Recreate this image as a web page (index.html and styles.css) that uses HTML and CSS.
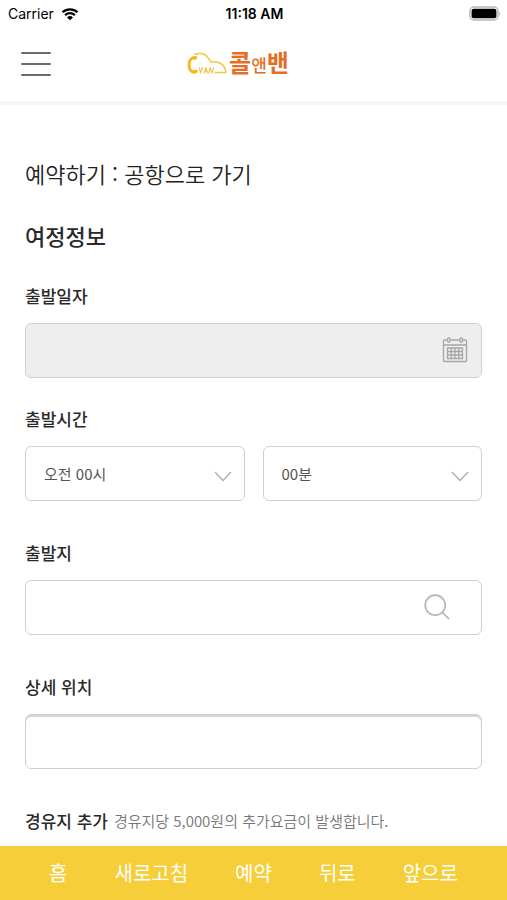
FILE: index.html
```html
<!DOCTYPE html>
<html lang="ko">
<head>
<meta charset="utf-8">
<meta name="viewport" content="width=device-width, initial-scale=1">
<title>콜앤밴 예약하기</title>
<link rel="stylesheet" href="styles.css">
</head>
<body>
<div class="status">
  <div class="carrier">
    <span>Carrier</span>
    <svg width="18" height="14" viewBox="0 0 18 14" aria-hidden="true">
      <path d="M1.5 5.3a11 11 0 0 1 15 0M4.1 8.1a7.2 7.2 0 0 1 9.8 0" fill="none" stroke="#000" stroke-width="2.2"/>
      <path d="M9 13.2 6 10.4a4.4 4.4 0 0 1 6 0z"/>
    </svg>
  </div>
  <span class="clock">11:18 AM</span>
  <svg class="battery" width="32" height="16" viewBox="0 0 32 16" aria-hidden="true">
    <rect x="1" y="1" width="28" height="13" rx="4" fill="#fff" stroke="#b5b5b5" stroke-width="1.4"/>
    <rect x="2.6" y="2.8" width="24.8" height="9.4" rx="2"/>
    <path d="M30.4 5.5q1.6 2 0 4z" fill="#999"/>
  </svg>
</div>
<header class="header">
  <button class="menu" type="button" aria-label="메뉴">
    <svg width="30" height="26" viewBox="0 0 30 26" aria-hidden="true">
      <path d="M1 2h28M1 13h28M1 24h28" stroke="#6b6b6b" stroke-width="2" stroke-linecap="round"/>
    </svg>
  </button>
  <a class="logo" href="#">
    <svg width="41" height="24" viewBox="0 0 41 24" aria-hidden="true">
      <g fill="none" stroke-linecap="round" stroke-linejoin="round">
        <path d="M8 2.2C14 .5 19 2 21.5 6.500L24 10C31 8.500 38 12 39 20.500H28" stroke="#f2c744" stroke-width="1.500"/>
        <path d="M6.500 5.500C.5 7.500.5 19 7 20.500" stroke="#f5b91c" stroke-width="2.800"/>
        <path d="M6.500 6.200 8.500 5.800M7 19.800 9 19.500" stroke="#f5b91c" stroke-width="3.400"/>
        <path d="M12.500 16 13.500 21 15.500 15.500M17 21 19 15.500 20 21M17.500 19h3M22 21 23 15.500 25 21 26.500 15.500" stroke="#efca59" stroke-width="1.300"/>
      </g>
    </svg>
    <span class="brand">콜<small>앤</small>밴</span>
  </a>
</header>
<main class="content">
  <h1 class="title">예약하기 : 공항으로 가기</h1>
  <h2 class="section">여정정보</h2>
  <form>
    <div class="group group-date">
      <label class="label" for="date">출발일자</label>
      <div class="field">
        <input class="control disabled" id="date" type="text" readonly>
        <svg class="icon icon-calendar" width="26" height="26" viewBox="0 0 26 26" fill="none" stroke="#a6a6a6" stroke-width="1.300" aria-hidden="true">
          <path d="M5 3H2.500A1 1 0 0 0 1.500 4V23.500a1 1 0 0 0 1 1h21a1 1 0 0 0 1-1V4a1 1 0 0 0-1-1H21M8.500 3h9M1.500 8h23"/>
          <ellipse cx="6.800" cy="3" rx="1.300" ry="2.200"/>
          <ellipse cx="19.200" cy="3" rx="1.300" ry="2.200"/>
          <path d="M5.500 11h15v10.500h-15zM5.500 14.500h15M5.500 18h15M9.250 11v10.500M13 11v10.500M16.750 11v10.500"/>
        </svg>
      </div>
    </div>
    <div class="group">
      <label class="label" for="hour">출발시간</label>
      <div class="pair">
        <div class="field">
          <select class="control" id="hour"><option>오전 00시</option></select>
          <svg class="icon icon-arrow" width="18" height="11" viewBox="0 0 18 11" aria-hidden="true"><path d="M1 1 9 9.500 17 1" fill="none" stroke="#aaa" stroke-width="1.200"/></svg>
        </div>
        <div class="field">
          <select class="control" id="minute" aria-label="출발시간 분"><option>00분</option></select>
          <svg class="icon icon-arrow" width="18" height="11" viewBox="0 0 18 11" aria-hidden="true"><path d="M1 1 9 9.500 17 1" fill="none" stroke="#aaa" stroke-width="1.200"/></svg>
        </div>
      </div>
    </div>
    <div class="group">
      <label class="label" for="origin">출발지</label>
      <div class="field">
        <input class="control" id="origin" type="text">
        <button class="icon icon-search" type="button" aria-label="검색">
          <svg width="26" height="26" viewBox="0 0 26 26" fill="none" stroke="#b5b5b5" stroke-width="1.700" aria-hidden="true"><circle cx="11.200" cy="11.200" r="10"/><path d="m18 18 7 7"/></svg>
        </button>
      </div>
    </div>
    <div class="group">
      <label class="label" for="detail">상세 위치</label>
      <div class="field"><input class="control inset" id="detail" type="text"></div>
    </div>
    <div class="stopover">
      <h3 class="label">경유지 추가</h3>
      <p class="hint">경유지당 5,000원의 추가요금이 발생합니다.</p>
    </div>
  </form>
</main>
<nav class="tabs">
  <a href="#">홈</a>
  <a href="#">새로고침</a>
  <a href="#">예약</a>
  <a href="#">뒤로</a>
  <a href="#">앞으로</a>
</nav>
</body>
</html>
```
FILE: styles.css
```css
* { box-sizing: border-box; }

body {
  margin: 0;
  padding-bottom: 54px;
  background: #fff;
  color: #2a2a2a;
  font-family: "Noto Sans CJK KR", sans-serif;
}

h1, h2, h3, p { margin: 0; }
a { text-decoration: none; }
svg { display: block; }

.status {
  display: grid;
  grid-template-columns: 1fr auto 1fr;
  align-items: center;
  height: 28px;
  padding: 0 6px 0 8px;
  color: #000;
  font: 14px/20px Inter, sans-serif;
}

.carrier { display: flex; align-items: center; gap: 7px; }
.clock { font-weight: 600; }
.battery { justify-self: end; }

.header {
  display: grid;
  grid-template-columns: 1fr auto 1fr;
  align-items: center;
  height: 77px;
  padding: 0 21px 2px;
  border-bottom: 4px solid #f5f5f5;
}

.menu {
  justify-self: start;
  padding: 0;
  border: 0;
  background: none;
}

.logo { display: flex; align-items: center; gap: 1px; padding-right: 31px; }

.brand {
  color: #e36f25;
  font-size: 24px;
  font-weight: 700;
  line-height: 28px;
}
.brand small { font-size: 17px; font-weight: 500; }

.content { padding: 52px 25px 16px; }

.title {
  color: #222;
  font-size: 22px;
  font-weight: 350;
  line-height: 32px;
}

.section {
  margin: 30px 0 33px;
  font-size: 22px;
  font-weight: 500;
  line-height: 32px;
}

.group { margin-bottom: 40px; }
.group-date { margin-bottom: 29px; }

.label {
  display: block;
  font-size: 17px;
  font-weight: 500;
  line-height: 24px;
}

.group .label { margin-bottom: 15px; }

.pair {
  display: grid;
  grid-template-columns: 1fr 1fr;
  gap: 18px;
}

.field { position: relative; }

.control {
  display: block;
  width: 100%;
  height: 55px;
  padding: 0 18px;
  border: 1px solid #d0d0d0;
  border-radius: 6px;
  outline: 0;
  appearance: none;
  background: #fff;
  color: #555;
  font: 15px/24px "Noto Sans CJK KR", sans-serif;
}

.disabled { background: #eee; }
.inset { box-shadow: inset 0 2px 1px #d4d4d4; }

.icon { position: absolute; }
.icon-calendar { top: 14px; right: 14px; }
.icon-arrow { top: 25px; right: 13px; pointer-events: none; }
.icon-search {
  top: 14px;
  right: 32px;
  padding: 0;
  border: 0;
  background: none;
}

.stopover { display: flex; align-items: center; gap: 6px; }
.hint { color: #777; font-size: 15px; font-weight: 350; line-height: 24px; }

.tabs {
  position: fixed;
  right: 0;
  bottom: 0;
  left: 0;
  display: flex;
  align-items: center;
  justify-content: center;
  gap: 47px;
  height: 54px;
  background: #f5ce3a;
  font-size: 20px;
  line-height: 30px;
}
.tabs a { color: #fff; }
```
